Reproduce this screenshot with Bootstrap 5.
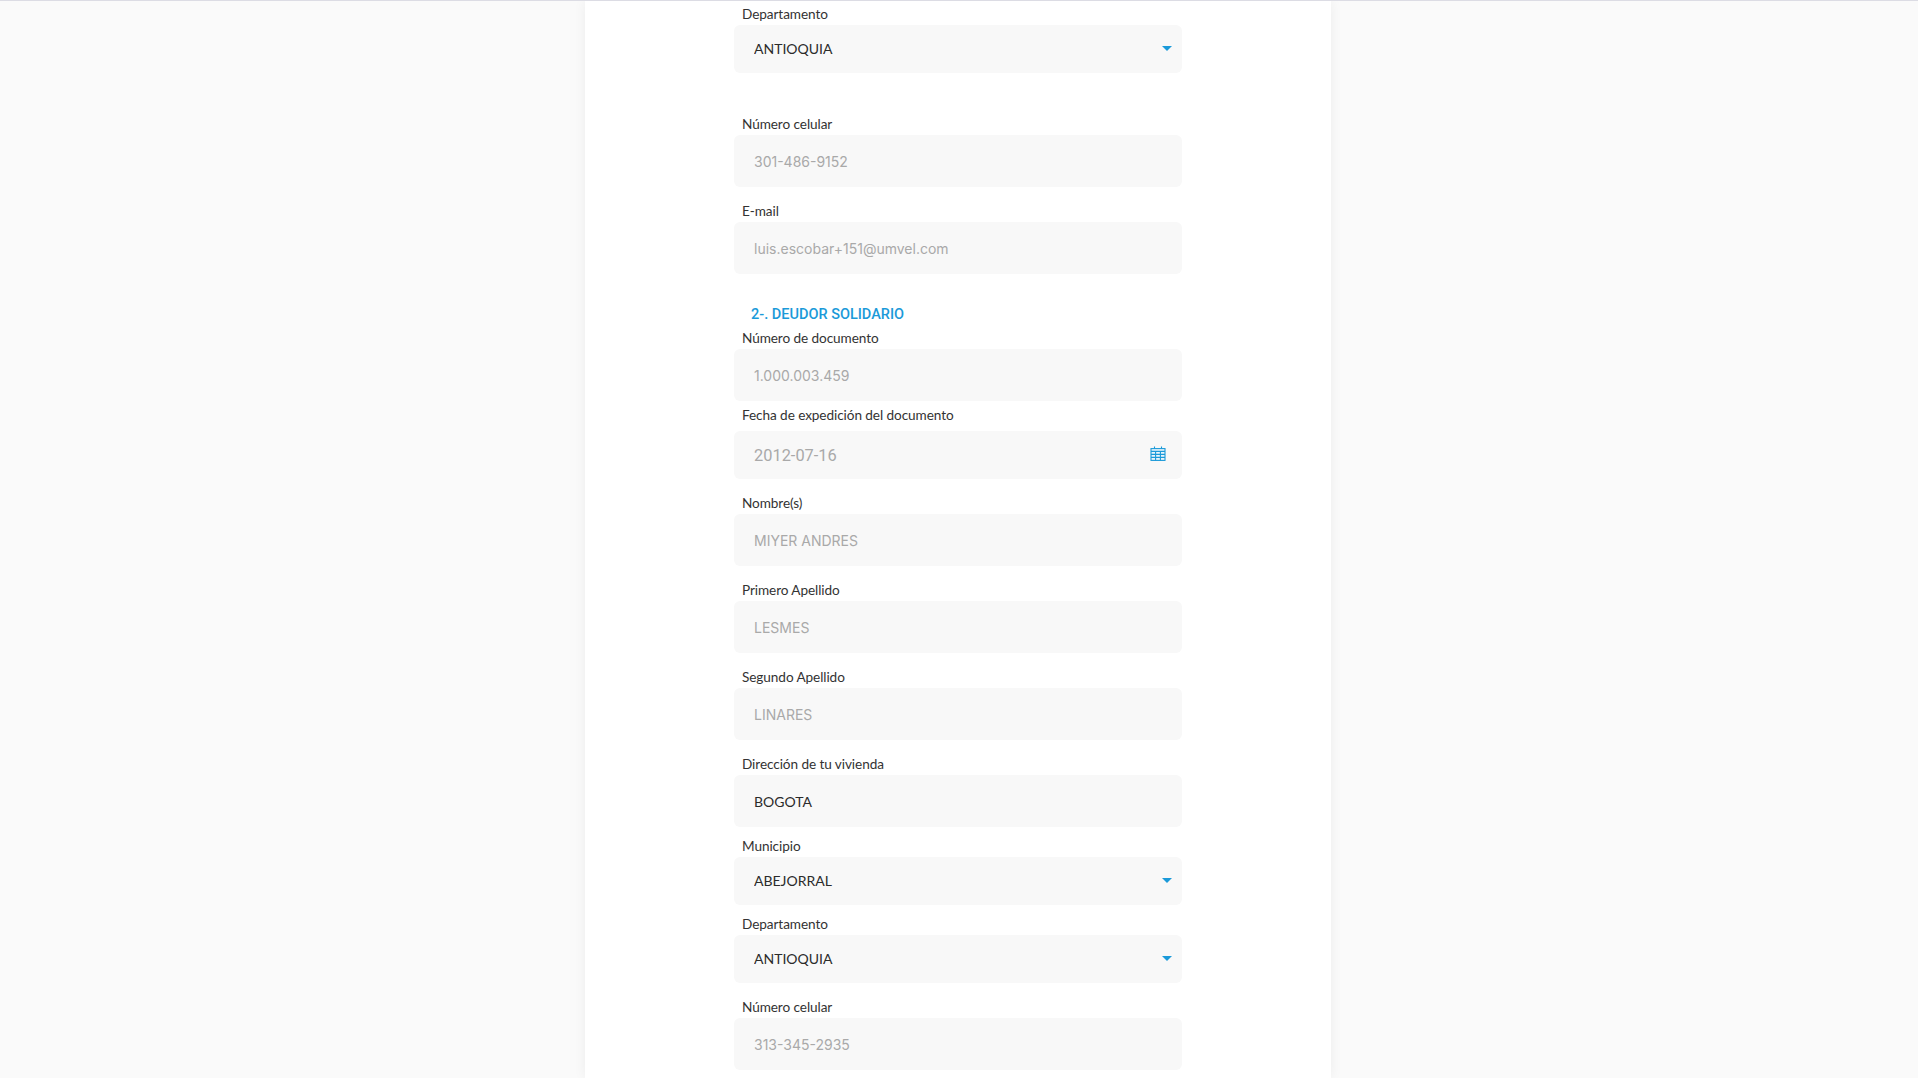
<!doctype html>
<html lang="es">
<head>
<meta charset="utf-8">
<title>Deudor solidario</title>
<link href="https://cdn.jsdelivr.net/npm/bootstrap@5.3.0/dist/css/bootstrap.min.css" rel="stylesheet">
<style>
html,body{height:100%;overflow:hidden}
body{background:#fafafa;border-top:1px solid #dcdce4;padding-right:2px;font-family:Lato,sans-serif;color:#2b2b2b}
.sheet{width:746px;height:100%;background:#fff;box-shadow:0 0 12px rgba(0,0,0,.06)}
.formcol{width:448px;padding-top:4px}
.fld-label{display:block;margin:0 0 0 8px;height:20px;font-size:13.6px;line-height:19px;letter-spacing:-.08px;color:#333}
.sheet .form-control,.sheet .form-select{height:52px;padding:0 20px;background:#f8f8f8;background-image:none;border:0;border-radius:6px;font-size:14px;color:#2b2b2b;box-shadow:none;opacity:1}
.sheet .form-control:disabled{color:#a9a9a9;font-family:Inter,sans-serif;font-size:14px;background:#f8f8f8;-webkit-text-fill-color:#a9a9a9}
.sheet .form-select{padding-bottom:2px}
.sheet .form-select,.sheet .ctl-short{height:48px}
.sheet .ctl-date:disabled{font-family:Roboto,sans-serif;font-size:16.4px}
.ctl-wrap{position:relative}
.caret-ic{position:absolute;right:10px;top:21px;width:10px;height:5px;pointer-events:none}
.cal-ic{position:absolute;right:16px;top:15px;width:16px;height:16px;pointer-events:none}
.sec-title{margin:0 0 5px 17px;height:20px;font-family:Roboto,sans-serif;font-size:14.5px;line-height:21px;font-weight:500;color:#1b9ad9}
.gap-5{margin-bottom:5px}.gap-10{margin-bottom:10px}.gap-15{margin-bottom:15px}.gap-30{margin-bottom:30px}.gap-42{margin-bottom:42px}
.lab-far{margin-bottom:5px}
</style>
</head>
<body>
<div class="sheet mx-auto d-flex justify-content-center">
<form class="formcol">
  <div class="gap-42"><label class="fld-label">Departamento</label>
    <div class="ctl-wrap"><select class="form-select"><option>ANTIOQUIA</option></select><svg class="caret-ic" viewBox="0 0 10 5"><path d="M0 0h10L5 5z" fill="#1b9ad9"/></svg></div></div>
  <div class="gap-15"><label class="fld-label">Número celular</label><input class="form-control" disabled value="301-486-9152"></div>
  <div class="gap-30"><label class="fld-label">E-mail</label><input class="form-control" disabled value="luis.escobar+151@umvel.com"></div>
  <div class="sec-title">2-. DEUDOR SOLIDARIO</div>
  <div class="gap-5"><label class="fld-label">Número de documento</label><input class="form-control" disabled value="1.000.003.459"></div>
  <div class="gap-15"><label class="fld-label lab-far">Fecha de expedición del documento</label>
    <div class="ctl-wrap"><input class="form-control ctl-short ctl-date" disabled value="2012-07-16">
    <svg class="cal-ic" viewBox="0 0 16 16" fill="none" stroke="#1b9ad9" stroke-width="1.1"><path d="M4.5 0.5v2.5M11.5 0.5v2.5"/><rect x="1" y="2.6" width="14" height="11.8" fill="#eaf5fb"/><path d="M1 5.4h14M1 8.4h14M1 11.4h14M5.6 5.4v9M10.4 5.4v9"/></svg></div></div>
  <div class="gap-15"><label class="fld-label">Nombre(s)</label><input class="form-control" disabled value="MIYER ANDRES"></div>
  <div class="gap-15"><label class="fld-label">Primero Apellido</label><input class="form-control" disabled value="LESMES"></div>
  <div class="gap-15"><label class="fld-label">Segundo Apellido</label><input class="form-control" disabled value="LINARES"></div>
  <div class="gap-10"><label class="fld-label">Dirección de tu vivienda</label><input class="form-control" value="BOGOTA"></div>
  <div class="gap-10"><label class="fld-label">Municipio</label>
    <div class="ctl-wrap"><select class="form-select"><option>ABEJORRAL</option></select><svg class="caret-ic" viewBox="0 0 10 5"><path d="M0 0h10L5 5z" fill="#1b9ad9"/></svg></div></div>
  <div class="gap-15"><label class="fld-label">Departamento</label>
    <div class="ctl-wrap"><select class="form-select"><option>ANTIOQUIA</option></select><svg class="caret-ic" viewBox="0 0 10 5"><path d="M0 0h10L5 5z" fill="#1b9ad9"/></svg></div></div>
  <div><label class="fld-label">Número celular</label><input class="form-control" disabled value="313-345-2935"></div>
</form>
</div>
<script src="https://cdn.jsdelivr.net/npm/bootstrap@5.3.0/dist/js/bootstrap.bundle.min.js"></script>
</body>
</html>
